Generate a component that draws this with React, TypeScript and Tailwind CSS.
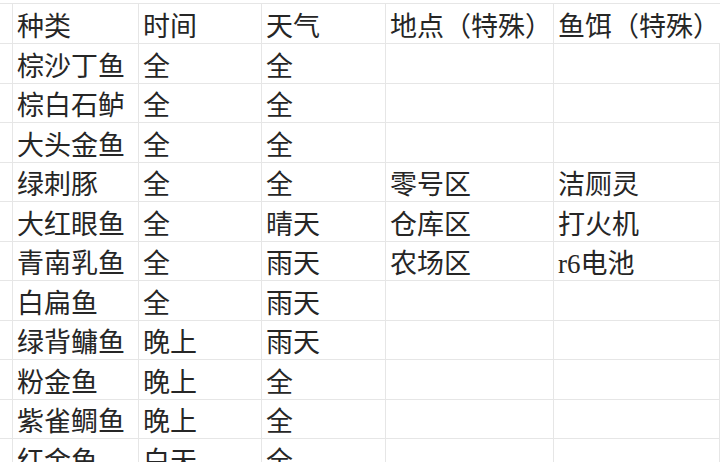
const rows: string[][] = [
  ["种类", "时间", "天气", "地点（特殊）", "鱼饵（特殊）"],
  ["棕沙丁鱼", "全", "全", "", ""],
  ["棕白石鲈", "全", "全", "", ""],
  ["大头金鱼", "全", "全", "", ""],
  ["绿刺豚", "全", "全", "零号区", "洁厕灵"],
  ["大红眼鱼", "全", "晴天", "仓库区", "打火机"],
  ["青南乳鱼", "全", "雨天", "农场区", "r6电池"],
  ["白扁鱼", "全", "雨天", "", ""],
  ["绿背鳙鱼", "晚上", "雨天", "", ""],
  ["粉金鱼", "晚上", "全", "", ""],
  ["紫雀鲷鱼", "晚上", "全", "", ""],
  ["红金鱼", "白天", "全", "", ""],
];

export default function App() {
  return (
    <div
      className="w-[720px] h-[462px] overflow-hidden bg-white text-[#262626]"
      style={{ fontFamily: '"Liberation Serif", "Noto Sans CJK SC", serif' }}
    >
      <div className="h-[4px] border-b border-[#e6e6e6]" />
      {rows.map((row, i) => (
        <div
          key={i}
          className={`grid grid-cols-[13px_126px_123px_124px_168px_1fr] border-b border-[#e6e6e6] ${i === 0 ? "h-[40px]" : "h-[39.5px]"}`}
        >
          <div className="border-r border-[#e6e6e6]" />
          {row.map((cell, j) => (
            <div
              key={j}
              className="flex items-end pl-[4px] pb-[2px] text-[27px] leading-none whitespace-nowrap overflow-visible border-r border-[#e6e6e6]"
            >
              {cell}
            </div>
          ))}
        </div>
      ))}
    </div>
  );
}
